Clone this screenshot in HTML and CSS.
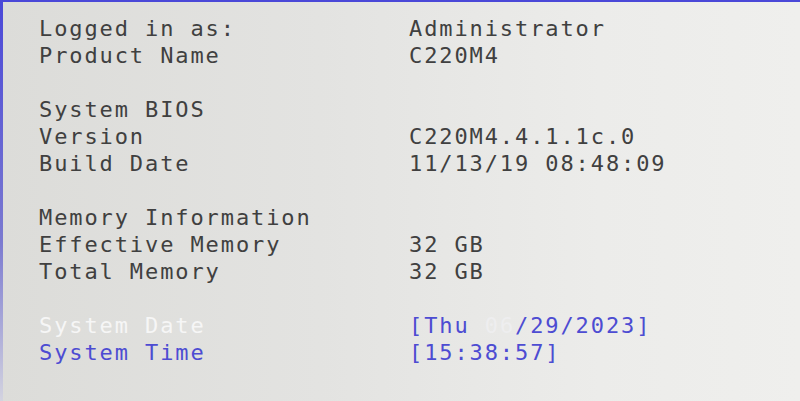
FILE: index.html
```
<!DOCTYPE html>
<html>
<head>
<meta charset="utf-8">
<link rel="stylesheet" href="styles.css">
</head>
<body>
<div class="screen">
  <div class="grid">
    <div class="lbl">Logged in as:</div><div class="val">Administrator</div>
    <div class="lbl">Product Name</div><div class="val">C220M4</div>
    <div class="gap"></div>
    <div class="lbl">System BIOS</div><div class="val"></div>
    <div class="lbl">Version</div><div class="val">C220M4.4.1.1c.0</div>
    <div class="lbl">Build Date</div><div class="val">11/13/19 08:48:09</div>
    <div class="gap"></div>
    <div class="lbl">Memory Information</div><div class="val"></div>
    <div class="lbl">Effective Memory</div><div class="val">32 GB</div>
    <div class="lbl">Total Memory</div><div class="val">32 GB</div>
    <div class="gap"></div>
    <div class="lbl sel">System Date</div><div class="val blue">[Thu <span class="hl">06</span>/29/2023]</div>
    <div class="lbl blue">System Time</div><div class="val blue">[15:38:57]</div>
  </div>
</div>
</body>
</html>
```
FILE: styles.css
```
html, body {
  margin: 0;
  padding: 0;
  width: 800px;
  height: 401px;
  overflow: hidden;
}
body {
  background: linear-gradient(90deg, #dcdcd9 0%, #e3e3e1 40%, #ececea 75%, #efefed 100%);
}
.screen {
  height: 401px;
  box-sizing: border-box;
  border-top: 2px solid #5553c8;
  border-left: 3px solid transparent;
  border-image: linear-gradient(180deg, #4a48d8 0%, #7b7ad0 60%, #d4d4e0 100%) 1;
  border-image-width: 2px 0 0 3px;
  padding: 13px 0 0 36px;
  font-family: "DejaVu Sans Mono", "Liberation Mono", monospace;
  font-size: 22px;
  letter-spacing: 1.9px;
  color: #404040;
}
.grid {
  display: grid;
  grid-template-columns: 370px 1fr;
  grid-auto-rows: 27px;
  line-height: 27px;
}
.gap {
  grid-column: 1 / 3;
}
.lbl, .val {
  white-space: pre;
}
.blue {
  color: #4d4cd2;
}
.sel {
  color: #f6f6f6;
}
.hl {
  color: #eeeeef;
}
```
